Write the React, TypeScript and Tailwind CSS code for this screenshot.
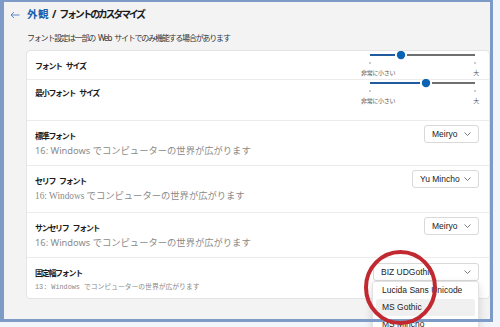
import React from "react";

const jp = "font-['Noto_Sans','Noto_Sans_CJK_JP',sans-serif]";

const Chevron = () => (
  <svg width="7" height="4" viewBox="0 0 7 4" className="shrink-0">
    <polyline points="0.5,0.5 3.5,3.5 6.5,0.5" fill="none" stroke="#6b6b6b" strokeWidth="0.9" />
  </svg>
);

// words joined with a fixed gap, since the negative tracking eats normal spaces
const Spaced = ({ text, gap }: { text: string; gap: string }) => (
  <>
    {text.split(" ").map((w, i) => (
      <React.Fragment key={i}>
        {i > 0 && <span className={`inline-block ${gap}`} />}
        <span>{w}</span>
      </React.Fragment>
    ))}
  </>
);

const Slider = ({ pos, top }: { pos: number; top: string }) => (
  <div className={`w-[118px] ${top}`}>
    <svg width="118" height="16" viewBox="0 0 118 16" className="block">
      <line x1="9" y1="4" x2={pos - 6} y2="4" stroke="#1f5b9d" strokeWidth="2" />
      <line x1={pos + 6} y1="4" x2="114" y2="4" stroke="#6f6f6f" strokeWidth="2" />
      <circle cx={pos} cy="4" r="4.2" fill="#0b63b3" />
      <line x1="9" y1="11" x2="9" y2="13" stroke="#9a9a9a" strokeWidth="1" />
      <line x1="114" y1="11" x2="114" y2="13" stroke="#9a9a9a" strokeWidth="1" />
    </svg>
    <div className={`mt-[2px] flex justify-between h-[8px] leading-[8px] text-[6px] tracking-[-0.3px] text-[#555] ${jp}`}>
      <span>非常に小さい</span>
      <span>大</span>
    </div>
  </div>
);

const Title = ({ text, pt }: { text: string; pt: string }) => (
  <div className={`${pt} leading-[12px] text-[8px] font-semibold tracking-[-1.3px] whitespace-nowrap ${jp}`}>
    <Spaced text={text} gap="w-[4px]" />
  </div>
);

type FontRow = {
  title: string;
  value: string;
  width: string;
  height: string;
  sampleClass: string;
  sample: string;
  open?: boolean;
};

const rows: FontRow[] = [
  {
    title: "標準フォント",
    value: "Meiryo",
    width: "w-[55px]",
    height: "h-[45px]",
    sampleClass: `text-[9.3px] leading-[14px] ${jp}`,
    sample: "16: Windows でコンピューターの世界が広がります",
  },
  {
    title: "セリフ フォント",
    value: "Yu Mincho",
    width: "w-[67px]",
    height: "h-[47px]",
    sampleClass: "text-[9.3px] leading-[14px] font-['Liberation_Serif','Noto_Sans_CJK_JP',serif]",
    sample: "16: Windows でコンピューターの世界が広がります",
  },
  {
    title: "サンセリフ フォント",
    value: "Meiryo",
    width: "w-[55px]",
    height: "h-[45px]",
    sampleClass: `text-[9.3px] leading-[14px] ${jp}`,
    sample: "16: Windows でコンピューターの世界が広がります",
  },
  {
    title: "固定幅フォント",
    value: "BIZ UDGothic",
    width: "w-[106px]",
    height: "h-[40px]",
    sampleClass: "text-[6.8px] leading-[12px] font-['Liberation_Mono','Noto_Sans_CJK_JP',monospace]",
    sample: "13: Windows でコンピューターの世界が広がります",
    open: true,
  },
];

export default function App() {
  return (
    <div className="relative w-[500px] h-[327px] overflow-hidden bg-[#f2f5f9]">
      <div className="w-[493px] h-[322px] bg-[#f3f3f3] pl-[4px] pt-[2px] text-[#1b1b1b]">
        <div className="h-[26px] flex items-center">
          <svg width="10" height="8" viewBox="0 0 10 8" className="ml-[6px]">
            <path d="M9.5 4H1M4 1L1 4L4 7" fill="none" stroke="#4f7fbf" strokeWidth="0.9" />
          </svg>
          <div className={`ml-[7px] text-[10.5px] font-bold whitespace-nowrap ${jp}`}>
            <span className="text-[#1860ad] tracking-[0.5px]">外観</span>
            <span className="inline-block w-[3px]" />
            <span>/</span>
            <span className="inline-block w-[3px]" />
            <span className="text-[10px] tracking-[-2.3px]">フォントのカスタマイズ</span>
          </div>
        </div>

        <div className={`mt-[4px] pl-[23px] h-[12px] leading-[12px] text-[8px] tracking-[-1.2px] text-[#333] whitespace-nowrap ${jp}`}>
          <Spaced text="フォント設定は一部の Web サイトでのみ機能する場合があります" gap="w-[3px]" />
        </div>

        <div className="ml-[22px] mt-[6px] w-[464px] bg-white border border-[#e4e4e4] rounded-[4px]">
          <div className="h-[29px] border-b border-[#ececec] flex justify-between pl-[8px] pr-[10px]">
            <Title pt="pt-[9px]" text="フォント サイズ" />
            <Slider pos={40} top="pt-0" />
          </div>
          <div className="h-[41px] border-b border-[#ececec] flex justify-between pl-[8px] pr-[10px]">
            <Title pt="pt-[7px]" text="最小フォント サイズ" />
            <Slider pos={65} top="-mt-[1px]" />
          </div>

          {rows.map((r, i) => (
            <div
              key={r.title}
              className={`${r.height} flex justify-between pl-[8px] pr-[10px] ${i < rows.length - 1 ? "border-b border-[#ececec]" : ""}`}
            >
              <div>
                <Title pt="pt-[9px]" text={r.title} />
                <div className={`mt-[2px] text-[#8a8a8a] whitespace-nowrap ${r.sampleClass}`}>{r.sample}</div>
              </div>
              <div className={`relative ${r.open ? "mt-[5px]" : "mt-[4px]"} ${r.width} h-[18px]`}>
                <div className="h-full border border-[#d9d9d9] rounded-[3px] bg-white flex items-center justify-between pl-[7px] pr-[7px]">
                  <span className="text-[8.5px] text-[#222] font-['Liberation_Sans',sans-serif]">{r.value}</span>
                  <Chevron />
                </div>
                {r.open && (
                  <div className="absolute left-[-1px] top-[18px] w-[107px] h-[60px] bg-white border border-[#e2e2e2] rounded-[3px] shadow-[0_3px_8px_rgba(0,0,0,0.15)] font-['Liberation_Sans',sans-serif] text-[8.5px] text-[#222]">
                    <div className="h-[17px] flex items-center px-[9px]">Lucida Sans Unicode</div>
                    <div className="h-[17px] mx-[3px] rounded-[2px] bg-[#f0f0f0] flex items-center px-[6px]">MS Gothic</div>
                    <div className="h-[17px] flex items-center px-[9px]">MS Mincho</div>
                  </div>
                )}
              </div>
            </div>
          ))}
        </div>
      </div>

      <div className="absolute left-0 top-0 w-[493px] h-[322px] border-l-4 border-t-2 border-r-[3px] border-b-[3px] border-[#7e9ac6] pointer-events-none" />

      <svg width="82" height="82" viewBox="0 0 82 82" className="absolute left-[360px] top-[246px] pointer-events-none">
        <ellipse cx="40.5" cy="41.5" rx="34.5" ry="35.5" fill="none" stroke="#c1282f" strokeWidth="4" />
      </svg>
    </div>
  );
}
